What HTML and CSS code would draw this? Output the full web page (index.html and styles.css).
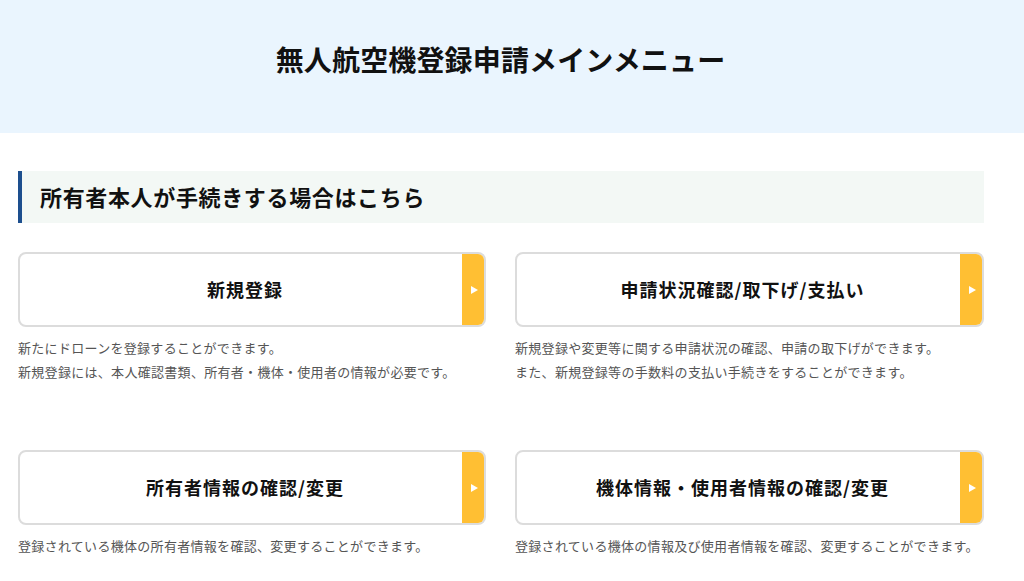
FILE: index.html
```html
<!DOCTYPE html>
<html lang="ja">
<head>
<meta charset="utf-8">
<title>無人航空機登録申請メインメニュー</title>
<link rel="stylesheet" href="styles.css">
</head>
<body>
<header class="page-header">
  <h1 class="page-title">無人航空機登録申請メインメニュー</h1>
</header>
<main class="content">
  <h2 class="section-title">所有者本人が手続きする場合はこちら</h2>
  <div class="menu-grid">
    <div class="menu-item">
      <a class="menu-card" href="#"><span class="menu-label">新規登録</span><span class="menu-tab"><span class="tri"></span></span></a>
      <p class="menu-desc">新たにドローンを登録することができます。<br>新規登録には、本人確認書類、所有者・機体・使用者の情報が必要です。</p>
    </div>
    <div class="menu-item">
      <a class="menu-card" href="#"><span class="menu-label">申請状況確認/取下げ/支払い</span><span class="menu-tab"><span class="tri"></span></span></a>
      <p class="menu-desc">新規登録や変更等に関する申請状況の確認、申請の取下げができます。<br>また、新規登録等の手数料の支払い手続きをすることができます。</p>
    </div>
    <div class="menu-item">
      <a class="menu-card" href="#"><span class="menu-label">所有者情報の確認/変更</span><span class="menu-tab"><span class="tri"></span></span></a>
      <p class="menu-desc">登録されている機体の所有者情報を確認、変更することができます。</p>
    </div>
    <div class="menu-item">
      <a class="menu-card" href="#"><span class="menu-label">機体情報・使用者情報の確認/変更</span><span class="menu-tab"><span class="tri"></span></span></a>
      <p class="menu-desc">登録されている機体の情報及び使用者情報を確認、変更することができます。</p>
    </div>
  </div>
</main>
</body>
</html>
```
FILE: styles.css
```css
* { box-sizing: border-box; }
html, body { margin: 0; padding: 0; }
body {
  font-family: "Noto Sans CJK JP", "Noto Sans", sans-serif;
  color: #1a1a1a;
  background: #fff;
}
.page-header {
  background: #eaf5fe;
  height: 133px;
  display: flex;
  align-items: center;
  justify-content: center;
  padding: 0 23px 16px 0;
}
.page-title {
  margin: 0;
  font-size: 28px;
  font-weight: 700;
  line-height: 1;
  letter-spacing: 0.15px;
  color: #111;
}
.content {
  padding: 38px 40px 0 18px;
}
.section-title {
  margin: 0;
  height: 52px;
  display: flex;
  align-items: center;
  background: #f3f8f5;
  border-left: 4px solid #1d4f8e;
  padding: 0 0 2px 18px;
  font-size: 22px;
  font-weight: 700;
  letter-spacing: 0.65px;
  color: #111;
  width: 966px;
}
.menu-grid {
  margin-top: 29px;
  width: 966px;
  display: grid;
  grid-template-columns: 468px 469px;
  column-gap: 29px;
  row-gap: 66px;
}
.menu-item { display: flex; flex-direction: column; }
.menu-card {
  display: flex;
  height: 75px;
  border: 2px solid #dcdcdc;
  border-radius: 8px;
  overflow: hidden;
  text-decoration: none;
  color: #111;
  background: #fff;
}
.menu-label {
  flex: 1;
  display: flex;
  align-items: center;
  justify-content: center;
  font-size: 18px;
  font-weight: 700;
  letter-spacing: 1px;
  padding: 0 0 2px 8px;
}
.menu-tab {
  width: 22px;
  background: #ffbf33;
  display: flex;
  align-items: center;
  justify-content: center;
}
.tri {
  width: 0;
  height: 0;
  border-top: 4px solid transparent;
  border-bottom: 4px solid transparent;
  border-left: 7px solid #fff;
  margin-left: 2px;
}
.menu-desc {
  margin: 9px 0 0;
  font-size: 13px;
  line-height: 24px;
  letter-spacing: 0.3px;
  color: #555;
}
```
